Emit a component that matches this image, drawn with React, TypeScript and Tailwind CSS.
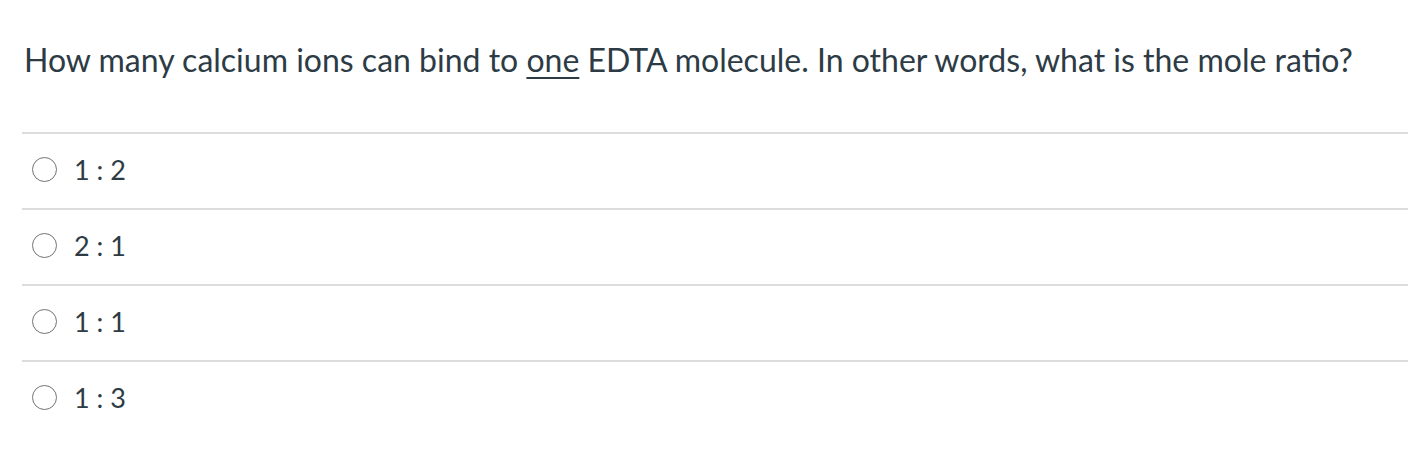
export default function App() {
  const options = ["1 : 2", "2 : 1", "1 : 1", "1 : 3"];
  return (
    <div className="w-[1408px] h-[454px] bg-white font-['Lato',sans-serif] text-[#2d3b45] overflow-hidden">
      <div className="pl-[24px] pt-[40px] h-[132px]">
        <p className="text-[32px] leading-[40px]">
          How many calcium ions can bind to <span className="underline underline-offset-[5px] decoration-[1.5px]">one</span> EDTA molecule. In other words, what is the mole ratio?
        </p>
      </div>
      <div className="ml-[22px]">
        {options.map((o) => (
          <div key={o} className="border-t-2 border-[#dcdcdc] h-[76px] flex items-center pl-[10px] pb-[4px]">
            <span className="w-[25px] h-[25px] rounded-full border-[1.5px] border-[#737373] shrink-0" />
            <span className="ml-[17px] text-[27px] leading-none">{o}</span>
          </div>
        ))}
      </div>
    </div>
  );
}
